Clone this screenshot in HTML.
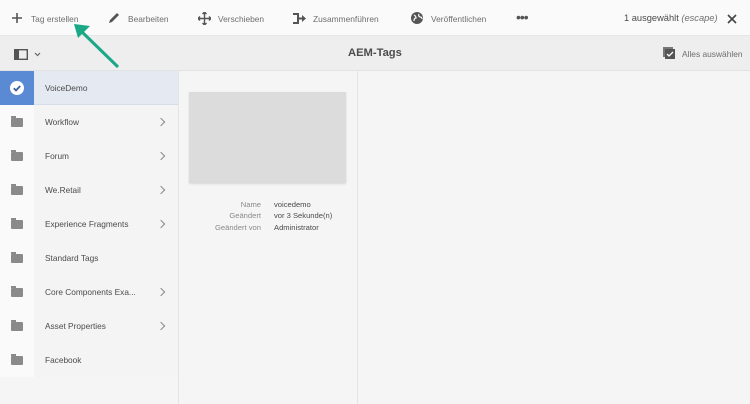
<!DOCTYPE html>
<html><head><meta charset="utf-8"><style>
*{margin:0;padding:0;box-sizing:border-box}
body{width:750px;height:404px;overflow:hidden;background:#f5f5f5;font-family:"Liberation Sans",sans-serif;position:relative;color:#4b4b4b}
.tb{position:absolute;left:0;top:0;width:750px;height:36px;background:#fafafa;border-bottom:1px solid #e6e6e6}
.t{position:absolute;top:14px;font-size:8.4px;color:#6e6e6e}
.ic{position:absolute}
.hd{position:absolute;left:0;top:36px;width:750px;height:35px;background:#eeeeee;border-bottom:1px solid #e2e2e2}
.col1{position:absolute;left:0;top:71px;width:178px;height:306px;background:#f4f4f4}
.icol{position:absolute;left:0;top:71px;width:34px;height:306px;background:#fafafa}
.row{position:absolute;left:0;width:178px;height:34px}
.row .n{position:absolute;left:45px;top:12px;font-size:8.3px;color:#4b4b4b}
.fold{position:absolute;left:11px;top:13px;width:12px;height:9px;background:#8a8a8a;border-radius:1px}
.fold:before{content:"";position:absolute;left:0;top:-2px;width:5px;height:2px;background:#8a8a8a}
.chev{position:absolute;left:158px;top:14px;width:6px;height:6px;border-right:1.5px solid #8a8a8a;border-top:1.5px solid #8a8a8a;transform:rotate(45deg)}
.div{position:absolute;top:71px;width:1px;height:333px;background:#e4e4e4}
.meta{position:absolute;font-size:7.6px;line-height:11.3px}
</style></head><body>
<div class="tb">
<svg class="ic" style="left:12px;top:13px" width="10" height="10"><path d="M5 0v10M0 5h10" stroke="#555" stroke-width="1.6"/></svg>
<div class="t" style="left:31px">Tag erstellen</div>
<svg class="ic" style="left:108px;top:12px" width="12" height="12"><path d="M1 11l1-3 7-7 2 2-7 7z" fill="#555"/></svg>
<div class="t" style="left:128px">Bearbeiten</div>
<svg class="ic" style="left:198px;top:12px" width="13" height="13"><path d="M6.5 0v13M0 6.5h13M4.5 2l2-2 2 2M4.5 11l2 2 2-2M2 4.5l-2 2 2 2M11 4.5l2 2-2 2" stroke="#555" stroke-width="1.4" fill="none"/></svg>
<div class="t" style="left:218px">Verschieben</div>
<svg class="ic" style="left:293px;top:13px" width="13" height="11"><path d="M0 1h5v9H0M5 5.5h4" stroke="#555" stroke-width="2" fill="none"/><path d="M9 2l4 3.5-4 3.5z" fill="#555"/></svg>
<div class="t" style="left:313px">Zusammenführen</div>
<svg class="ic" style="left:411px;top:12px" width="12" height="12"><circle cx="6" cy="6" r="6" fill="#555"/><path d="M3 3q2 1 2 3-2 0-2 3M8 2q-1 2 1 3 2 0 2 2" stroke="#fafafa" stroke-width="1.2" fill="none"/></svg>
<div class="t" style="left:431px">Veröffentlichen</div>
<div class="t" style="left:516px;top:9px;font-size:14px;letter-spacing:-1px;color:#555">•••</div>
<div class="t" style="left:624px;top:13px;font-size:9.3px;color:#4b4b4b">1 ausgewählt <i style="color:#707070">(escape)</i></div>
<svg class="ic" style="left:727px;top:14px" width="10" height="10"><path d="M1 1l8 8M9 1l-8 8" stroke="#444" stroke-width="1.6"/></svg>
</div>
<div class="hd">
<svg class="ic" style="left:14px;top:13px" width="14" height="11"><rect x="0.7" y="0.7" width="12.6" height="9.6" fill="none" stroke="#555" stroke-width="1.4"/><rect x="0" y="0" width="5" height="11" fill="#555"/></svg>
<svg class="ic" style="left:34px;top:16px" width="7" height="5"><path d="M1 1l2.5 2.5L6 1" stroke="#666" stroke-width="1.2" fill="none"/></svg>
<div style="position:absolute;left:348px;top:11px;font-size:11.2px;font-weight:bold;color:#4b4b4b">AEM-Tags</div>
<svg class="ic" style="left:663px;top:11px" width="12" height="12"><rect x="0" y="0" width="10" height="10" fill="#777"/><rect x="2" y="2" width="10" height="10" fill="#555"/><path d="M4 7l2 2 4-4" stroke="#fff" stroke-width="1.3" fill="none"/></svg>
<div style="position:absolute;left:682px;top:13px;font-size:8.4px;color:#6e6e6e">Alles auswählen</div>
</div>
<div class="col1"></div>
<div class="icol"></div>
<div class="row" style="top:71px;background:#e4e9f2;border-bottom:1px solid #d7dde8"><div style="position:absolute;left:0;top:0;width:34px;height:34px;background:#5a8ad3"></div><svg class="ic" style="left:10px;top:10px" width="14" height="14"><circle cx="7" cy="7" r="7" fill="#fff"/><path d="M3.8 7.2l2.2 2.2 4.2-4.4" stroke="#3b5f9a" stroke-width="1.8" fill="none"/></svg><div class="n">VoiceDemo</div></div>
<div class="row" style="top:105px"><div class="fold"></div><div class="n">Workflow</div><div class="chev"></div></div>
<div class="row" style="top:139px"><div class="fold"></div><div class="n">Forum</div><div class="chev"></div></div>
<div class="row" style="top:173px"><div class="fold"></div><div class="n">We.Retail</div><div class="chev"></div></div>
<div class="row" style="top:207px"><div class="fold"></div><div class="n">Experience Fragments</div><div class="chev"></div></div>
<div class="row" style="top:241px"><div class="fold"></div><div class="n">Standard Tags</div></div>
<div class="row" style="top:275px"><div class="fold"></div><div class="n">Core Components Exa...</div><div class="chev"></div></div>
<div class="row" style="top:309px"><div class="fold"></div><div class="n">Asset Properties</div><div class="chev"></div></div>
<div class="row" style="top:343px"><div class="fold"></div><div class="n">Facebook</div></div>
<div class="div" style="left:178px"></div>
<div class="div" style="left:357px"></div>
<div style="position:absolute;left:189px;top:92px;width:157px;height:91px;background:#dcdcdc;box-shadow:0 1px 2px rgba(0,0,0,.12)"></div>
<div class="meta" style="left:190px;top:199px;width:71px;text-align:right;color:#8a8a8a">Name<br>Geändert<br>Geändert von</div>
<div class="meta" style="left:274px;top:199px;color:#4b4b4b">voicedemo<br>vor 3 Sekunde(n)<br>Administrator</div>
<svg class="ic" style="left:70px;top:22px" width="56" height="50"><path d="M48 45L10 8" stroke="#1aa886" stroke-width="3"/><path d="M4 2l16 2-12 12z" fill="#1aa886"/></svg>
</body></html>
